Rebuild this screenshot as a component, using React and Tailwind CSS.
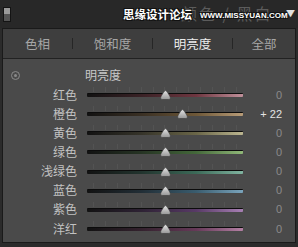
import React from "react";

const rows = [
  { label: "红色", value: 0, track: "bg-[linear-gradient(to_right,#121212,#3a2226_35%,#6e3640_70%,#c0909a)]" },
  { label: "橙色", value: 22, track: "bg-[linear-gradient(to_right,#121212,#3a3024_35%,#6e5838_70%,#b89c78)]" },
  { label: "黄色", value: 0, track: "bg-[linear-gradient(to_right,#121212,#36342a_35%,#6a6648_70%,#bcb690)]" },
  { label: "绿色", value: 0, track: "bg-[linear-gradient(to_right,#121212,#263424_35%,#44683a_70%,#90b878)]" },
  { label: "浅绿色", value: 0, track: "bg-[linear-gradient(to_right,#121212,#22342e_35%,#3c6a58_70%,#80b4a0)]" },
  { label: "蓝色", value: 0, track: "bg-[linear-gradient(to_right,#121212,#222e36_35%,#3a5c6e_70%,#7aa4bc)]" },
  { label: "紫色", value: 0, track: "bg-[linear-gradient(to_right,#121212,#2e2234_35%,#583a66_70%,#a880b4)]" },
  { label: "洋红", value: 0, track: "bg-[linear-gradient(to_right,#121212,#34222e_35%,#663a58_70%,#b480a4)]" },
];

const tabs = [
  { name: "色相", w: "w-[70px]" },
  { name: "饱和度", w: "w-[80px]" },
  { name: "明亮度", w: "w-[80px]", active: true },
  { name: "全部", w: "flex-1" },
];

function Thumb() {
  return (
    <svg width="11" height="10" viewBox="0 0 11 10">
      <defs>
        <linearGradient id="tg" x1="0" y1="0" x2="0" y2="1">
          <stop offset="0" stopColor="#e4e4e4" />
          <stop offset="1" stopColor="#969696" />
        </linearGradient>
      </defs>
      <path
        d="M5.5 0.6 C6.6 0.6 10.4 6.6 10.4 8 C10.4 9.1 9.6 9.5 8.6 9.5 L2.4 9.5 C1.4 9.5 0.6 9.1 0.6 8 C0.6 6.6 4.4 0.6 5.5 0.6 Z"
        fill="url(#tg)"
        stroke="#3a3a3a"
        strokeWidth="0.6"
      />
    </svg>
  );
}

function Slider({ track, value }) {
  const left = 78 + (value / 100) * 78;
  return (
    <div className="relative w-[156px] h-[19px] flex flex-col justify-center">
      <div className="absolute left-0 right-0 top-[2px] flex justify-between px-[6px]">
        {Array.from({ length: 13 }).map((_, i) => (
          <div key={i} className="w-px h-[5px] bg-[#535353]" />
        ))}
      </div>
      <div className={`h-[4px] w-full rounded-[1px] border-t border-[#0c0c0c] ${track} mt-[1px]`} />
      <div className="absolute top-[5px]" style={{ left: left - 5.5 }}>
        <Thumb />
      </div>
    </div>
  );
}

const outline = "1px 1px 0 #111, -1px -1px 0 #111, 1px -1px 0 #111, -1px 1px 0 #111";

export default function App() {
  return (
    <div
      className="w-[298px] h-[247px] bg-[#2b2b2b] flex flex-col overflow-hidden"
      style={{ fontFamily: '"Noto Sans CJK SC", "Noto Sans", sans-serif' }}
    >
      {/* header */}
      <div className="relative h-[28px] flex items-center bg-[#282828]">
        <div className="ml-[3px] w-[8px] h-[15px] border border-[#141414] flex flex-col">
          <div className="flex-1 bg-[#9a9a9a]" />
          <div className="flex-1 bg-[#555555]" />
        </div>
        <div className="absolute left-[181px] top-[4px] text-[16px] leading-[18px] text-[#5c5c5c] tracking-[2px]">
          颜色 / 黑白
        </div>
        <div
          className="absolute left-[123px] top-[7px] text-[11.5px] leading-[15px] font-bold text-white"
          style={{ textShadow: outline }}
        >
          思缘设计论坛
        </div>
        <div
          className="absolute left-[200px] top-[11px] text-[8px] leading-[10px] font-bold text-white"
          style={{ fontFamily: '"Liberation Sans", sans-serif', textShadow: outline }}
        >
          WWW.MISSYUAN.COM
        </div>
        <div className="absolute left-[286px] top-[9px] text-[9px] leading-[10px] text-[#e0e0e0]">▼</div>
      </div>

      {/* body */}
      <div className="mx-[2px] border border-[#1a1a1a] flex flex-col h-[215px]">
        <div className="h-[30px] bg-[#3e3e3e] flex items-center border-b border-[#222222]">
          {tabs.map((t, i) => (
            <div key={t.name} className={`${t.w} h-full flex items-center relative`}>
              <div
                className={`flex-1 text-center text-[12.5px] leading-[14px] ${
                  t.active ? "text-[#ececec]" : "text-[#a6a6a6]"
                }`}
              >
                {t.name}
              </div>
              {i < 3 && <div className="w-px h-[11px] bg-[#262626]" />}
            </div>
          ))}
        </div>
        <div className="flex-1 bg-[#4a4a4a] flex flex-col">
          <div className="h-[26px] mt-[3px] flex items-center">
            <div className="ml-[8px] w-[9px] h-[9px] rounded-full border border-[#8a8a8a] flex items-center justify-center">
              <div className="w-[3px] h-[3px] rounded-full bg-[#8a8a8a]" />
            </div>
            <div className="ml-[65px] text-[12px] leading-[14px] text-[#c8c8c8]">明亮度</div>
          </div>
          <div className="flex flex-col mt-[-3px]">
            {rows.map((r) => (
              <div key={r.label} className="h-[19.15px] flex items-center">
                <div className="w-[74px] text-right text-[12px] leading-[14px] text-[#c2c2c2]">{r.label}</div>
                <div className="ml-[10px]">
                  <Slider track={r.track} value={r.value} />
                </div>
                <div
                  className={`w-[39px] text-right text-[11px] leading-[14px] ${
                    r.value ? "text-[#e4e4e4]" : "text-[#8a8a8a]"
                  }`}
                  style={{ fontFamily: '"Liberation Sans", sans-serif' }}
                >
                  {r.value ? `+ ${r.value}` : "0"}
                </div>
              </div>
            ))}
          </div>
        </div>
      </div>
    </div>
  );
}
